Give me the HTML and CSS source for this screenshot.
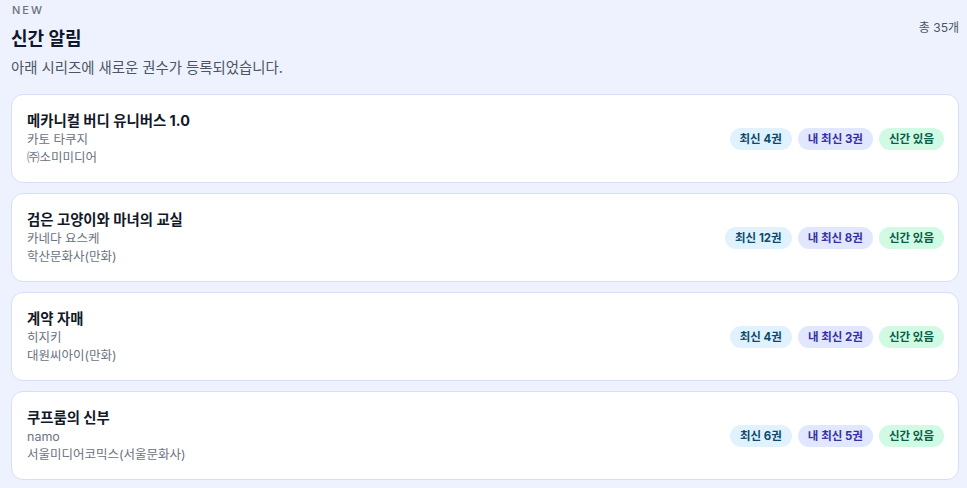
FILE: index.html
```html
<!DOCTYPE html>
<html lang="ko">
<head>
<meta charset="utf-8">
<title>신간 알림</title>
<link rel="stylesheet" href="styles.css">
</head>
<body>
<div class="page">
  <header class="head">
    <div class="head-text">
      <div class="eyebrow">NEW</div>
      <h1 class="title">신간 알림</h1>
      <p class="desc">아래 시리즈에 새로운 권수가 등록되었습니다.</p>
    </div>
    <div class="count">총 35개</div>
  </header>
  <ul class="list">
    <li class="card">
      <div class="info">
        <div class="name">메카니컬 버디 유니버스 1.0</div>
        <div class="meta">카토 타쿠지</div>
        <div class="meta">㈜소미미디어</div>
      </div>
      <div class="badges">
        <span class="badge latest">최신 4권</span>
        <span class="badge mine">내 최신 3권</span>
        <span class="badge new">신간 있음</span>
      </div>
    </li>
    <li class="card">
      <div class="info">
        <div class="name">검은 고양이와 마녀의 교실</div>
        <div class="meta">카네다 요스케</div>
        <div class="meta">학산문화사(만화)</div>
      </div>
      <div class="badges">
        <span class="badge latest">최신 12권</span>
        <span class="badge mine">내 최신 8권</span>
        <span class="badge new">신간 있음</span>
      </div>
    </li>
    <li class="card">
      <div class="info">
        <div class="name">계약 자매</div>
        <div class="meta">히지키</div>
        <div class="meta">대원씨아이(만화)</div>
      </div>
      <div class="badges">
        <span class="badge latest">최신 4권</span>
        <span class="badge mine">내 최신 2권</span>
        <span class="badge new">신간 있음</span>
      </div>
    </li>
    <li class="card">
      <div class="info">
        <div class="name">쿠프룸의 신부</div>
        <div class="meta">namo</div>
        <div class="meta">서울미디어코믹스(서울문화사)</div>
      </div>
      <div class="badges">
        <span class="badge latest">최신 6권</span>
        <span class="badge mine">내 최신 5권</span>
        <span class="badge new">신간 있음</span>
      </div>
    </li>
  </ul>
</div>
</body>
</html>
```
FILE: styles.css
```css
* { box-sizing: border-box; }
html, body { margin: 0; padding: 0; }
body {
  background: #eef2ff;
  font-family: "Inter", "Noto Sans CJK KR", sans-serif;
  color: #111827;
}
.page {
  padding: 3px 8px 8px 11px;
}
.head {
  display: flex;
  justify-content: space-between;
  align-items: flex-start;
}
.eyebrow {
  font-size: 11px;
  line-height: 14px;
  letter-spacing: 2px;
  color: #6b7280;
  font-weight: 500;
  padding-left: 1px;
}
.title {
  margin: 10px 0 0;
  font-size: 18px;
  line-height: 24px;
  font-weight: 700;
  color: #0f172a;
}
.desc {
  margin: 7px 0 0;
  font-size: 14.4px;
  line-height: 20px;
  color: #4b5563;
}
.count {
  margin-top: 17px;
  font-size: 12px;
  line-height: 16px;
  color: #4b5563;
}
.list {
  list-style: none;
  margin: 16px 0 0;
  padding: 0;
  display: flex;
  flex-direction: column;
  gap: 10px;
}
.card {
  background: #ffffff;
  border: 1px solid #d9def8;
  border-radius: 12px;
  height: 89px;
  padding: 0 14px 0 15px;
  display: flex;
  align-items: center;
  justify-content: space-between;
}
.name {
  font-size: 14.4px;
  line-height: 20px;
  font-weight: 700;
  color: #111827;
}
.meta {
  font-size: 12.5px;
  line-height: 18px;
  color: #6b7280;
}
.badges {
  display: flex;
  gap: 6px;
  align-items: center;
}
.badge {
  font-size: 11.5px;
  line-height: 22px;
  height: 22px;
  padding: 0 10px;
  border-radius: 999px;
  font-weight: 700;
}
.badge.latest { background: #e0f2fe; color: #0c4a6e; }
.badge.mine { background: #e0e7ff; color: #3730a3; }
.badge.new { background: #d1fae5; color: #065f46; }
```
